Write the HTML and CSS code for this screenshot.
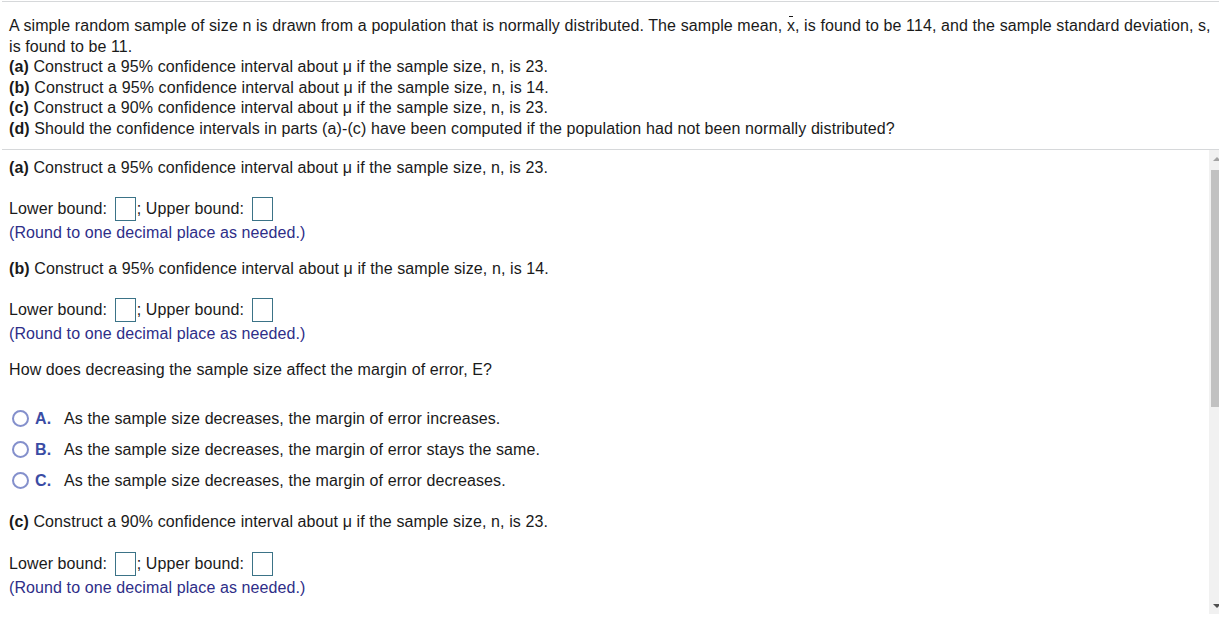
FILE: index.html
```html
<!DOCTYPE html>
<html lang="en">
<head>
<meta charset="utf-8">
<title>Confidence intervals</title>
<link rel="stylesheet" href="styles.css">
</head>
<body>
<div class="page">
  <div class="stem">
    <p>A simple random sample of size n is drawn from a population that is normally distributed. The sample mean, <span class="xbar">x</span>, is found to be 114, and the sample standard deviation, s, is found to be 11.</p>
    <p><b>(a)</b> Construct a 95% confidence interval about <span class="mu">μ</span> if the sample size, n, is 23.</p>
    <p><b>(b)</b> Construct a 95% confidence interval about <span class="mu">μ</span> if the sample size, n, is 14.</p>
    <p><b>(c)</b> Construct a 90% confidence interval about <span class="mu">μ</span> if the sample size, n, is 23.</p>
    <p><b>(d)</b> Should the confidence intervals in parts (a)-(c) have been computed if the population had not been normally distributed?</p>
  </div>
  <div class="work">
    <div class="content">
      <p class="part"><b>(a)</b> Construct a 95% confidence interval about <span class="mu">μ</span> if the sample size, n, is 23.</p>
      <div class="bounds">Lower bound: <span class="box"></span>; Upper bound: <span class="box"></span></div>
      <p class="hint">(Round to one decimal place as needed.)</p>

      <p class="part gap16"><b>(b)</b> Construct a 95% confidence interval about <span class="mu">μ</span> if the sample size, n, is 14.</p>
      <div class="bounds">Lower bound: <span class="box"></span>; Upper bound: <span class="box"></span></div>
      <p class="hint">(Round to one decimal place as needed.)</p>

      <p class="part gap16">How does decreasing the sample size affect the margin of error, E?</p>

      <ul class="choices">
        <li><span class="radio"></span><span class="letter">A.</span><span>As the sample size decreases, the margin of error increases.</span></li>
        <li><span class="radio"></span><span class="letter">B.</span><span>As the sample size decreases, the margin of error stays the same.</span></li>
        <li><span class="radio"></span><span class="letter">C.</span><span>As the sample size decreases, the margin of error decreases.</span></li>
      </ul>

      <p class="part gap21"><b>(c)</b> Construct a 90% confidence interval about <span class="mu">μ</span> if the sample size, n, is 23.</p>
      <div class="bounds b20">Lower bound: <span class="box"></span>; Upper bound: <span class="box"></span></div>
      <p class="hint">(Round to one decimal place as needed.)</p>
    </div>
    <div class="scrollbar">
      <div class="arrow up"></div>
      <div class="thumb"></div>
      <div class="rest"></div>
      <div class="arrow down"></div>
    </div>
  </div>
</div>
</body>
</html>
```

FILE: styles.css
```css
html, body {
  margin: 0;
  padding: 0;
  background: #fff;
  overflow: hidden;
}

body {
  font-family: "Liberation Sans", Arial, sans-serif;
  font-size: 16px;
  letter-spacing: 0.1px;
  color: #1a1a1a;
}

p {
  margin: 0;
}

.page {
  margin-top: 1px;
  margin-left: 2px;
  width: 1217px;
}

.stem {
  border-top: 1px solid #d6d8da;
  padding: 14px 0 9px 7px;
  line-height: 20.6px;
}

.xbar {
  position: relative;
}

.xbar::before {
  content: "";
  position: absolute;
  left: 2px;
  right: 2px;
  top: -1px;
  border-top: 1px solid #1a1a1a;
}

.work {
  border-top: 1px solid #d6d8da;
  display: flex;
  height: 464px;
}

.content {
  flex: 1;
  padding: 8px 0 0 7px;
  line-height: 20px;
  overflow: hidden;
}

.part.gap16 {
  margin-top: 16px;
}

.part.gap21 {
  margin-top: 21px;
}

.bounds {
  margin-top: 19px;
  display: flex;
  align-items: center;
  height: 24px;
  white-space: pre;
}

.bounds.b20 {
  margin-top: 20px;
}

.box {
  display: inline-block;
  width: 19px;
  height: 22px;
  border: 1px solid #3b7387;
  background: #fff;
  margin: 0 1px 0 3px;
}

.hint {
  margin-top: 2px;
  color: #2e2e88;
}

.choices {
  list-style: none;
  margin: 29px 0 0 0;
  padding: 0;
}

.choices li {
  display: flex;
  align-items: center;
  height: 20px;
  margin-bottom: 11px;
}

.radio {
  border: 2px solid #8490cc;
  border-radius: 50%;
  box-sizing: border-box;
  width: 17px;
  height: 17px;
  margin: 0 6px 0 3px;
}

.letter {
  font-weight: bold;
  color: #3a4ca4;
  width: 29px;
}

.scrollbar {
  width: 10px;
  background: #f1f1f1;
  display: flex;
  flex-direction: column;
}

.arrow {
  height: 20px;
  position: relative;
}

.arrow.up::after {
  content: "";
  position: absolute;
  left: 4px;
  top: 7px;
  border-left: 4px solid transparent;
  border-right: 4px solid transparent;
  border-bottom: 4px solid #a3a3a3;
}

.arrow.down::after {
  content: "";
  position: absolute;
  left: 4px;
  top: 10px;
  border-left: 4px solid transparent;
  border-right: 4px solid transparent;
  border-top: 4px solid #505050;
}

.thumb {
  height: 237px;
  margin-left: 2px;
  background: #c1c1c1;
}

.rest {
  flex: 1;
}
```
